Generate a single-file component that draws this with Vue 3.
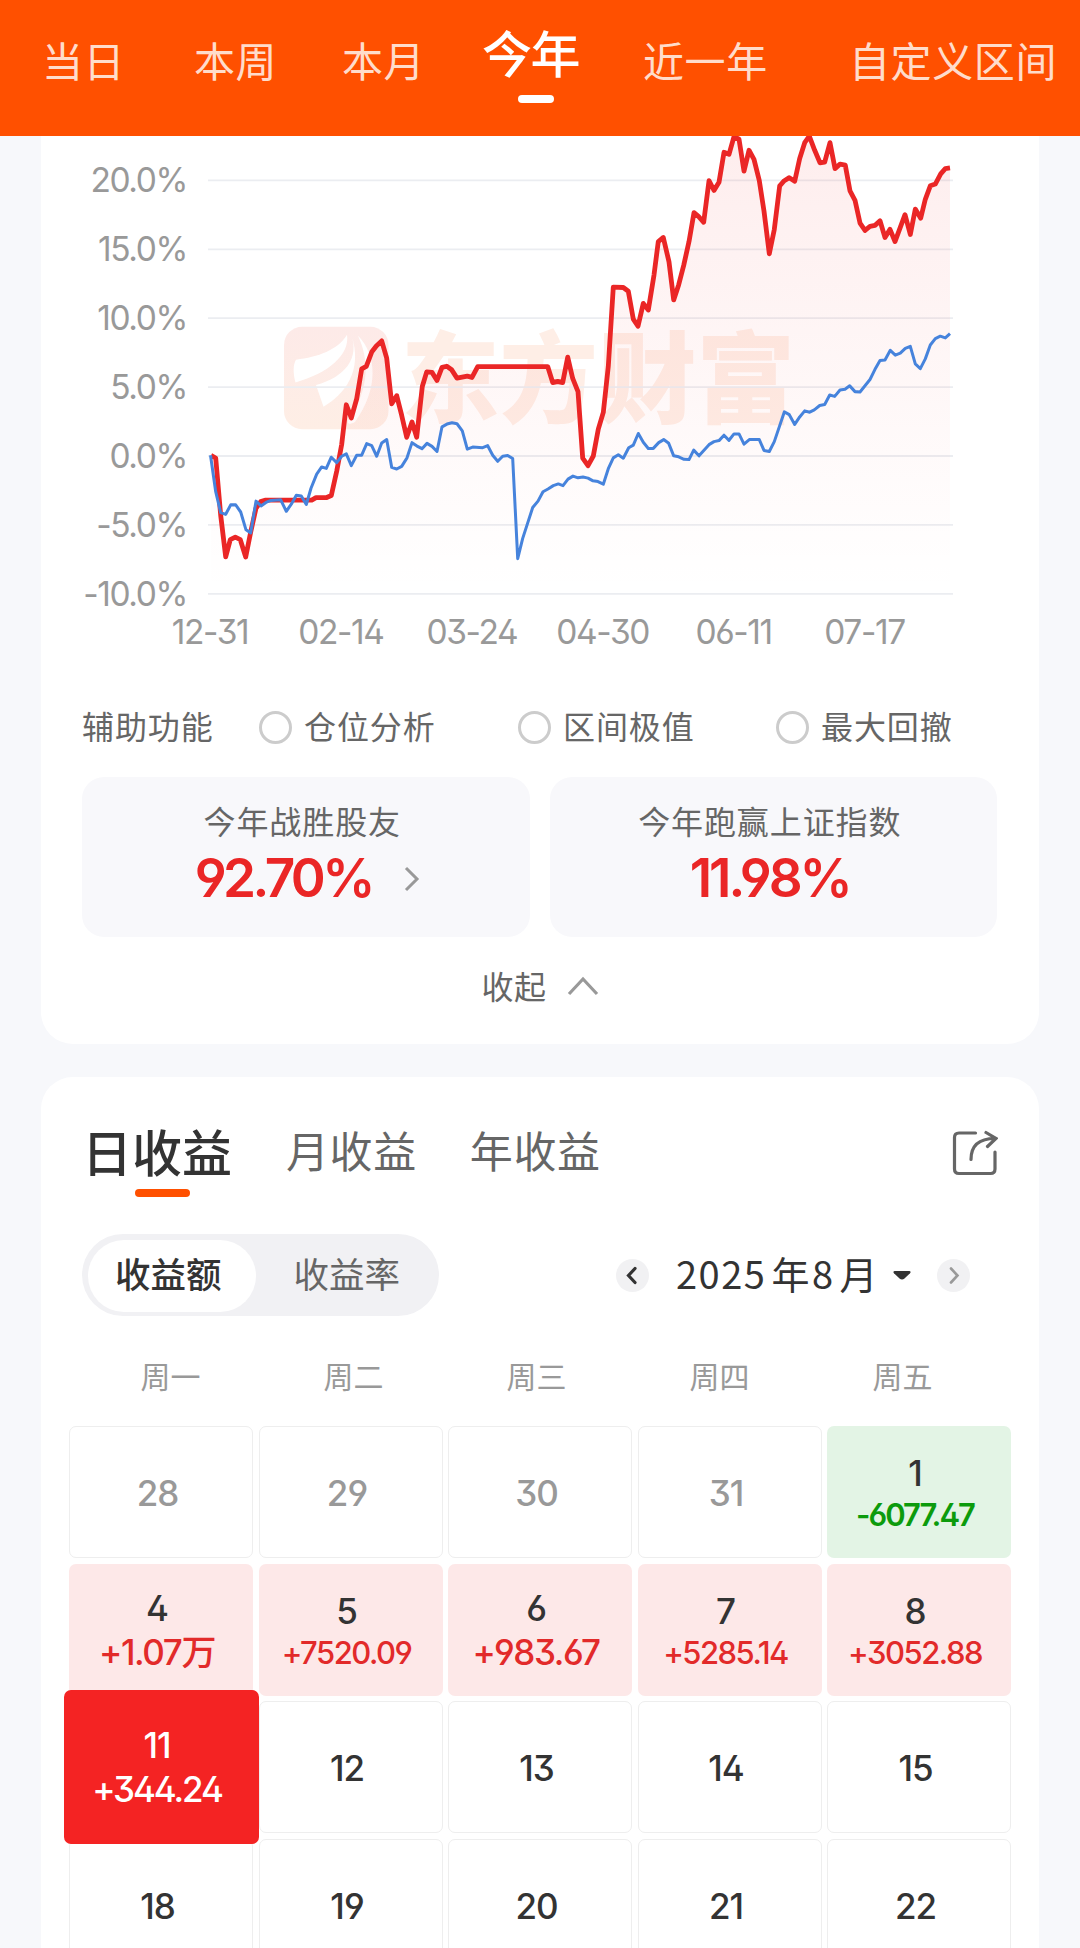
<template>
  <div class="page">
    <header class="range-bar">
      <div
        v-for="r in ranges"
        :key="r"
        class="range"
        :class="{ active: r === activeRange }"
        @click="activeRange = r"
      >{{ r }}</div>
    </header>

    <section class="card chart-card">
      <svg class="chart" viewBox="41 136 998 561">
        <defs>
          <linearGradient id="areaFill" gradientUnits="userSpaceOnUse" x1="0" y1="136" x2="0" y2="587">
            <stop offset="0" stop-color="#f02020" stop-opacity="0.08" />
            <stop offset="0.75" stop-color="#f02020" stop-opacity="0.018" />
            <stop offset="1" stop-color="#f02020" stop-opacity="0" />
          </linearGradient>
          <linearGradient id="markFill" x1="0" y1="0" x2="0" y2="1">
            <stop offset="0" stop-color="#fdeae8" />
            <stop offset="1" stop-color="#feeee5" />
          </linearGradient>
        </defs>

        <!-- watermark -->
        <g transform="translate(0 -1.8) scale(1 1.014)">
          <rect x="284" y="324" width="104.5" height="101" rx="18" fill="url(#markFill)" />
          <path class="leaf" d="M296 356.5C318 354 338 347 347 332C350 352 328 370 295.500 379C293 370 293 361 296 356.500Z" />
          <path class="leaf" d="M351 331C360 355 345 374 316 381.500L323.500 403C344 391 364 368 351 331Z" />
          <path class="leaf" d="M358 333C377 352 379 385 355 418C350 421 346 420 349 415C370 385 369 356 358 333Z" />
          <text class="mark-text" x="401" y="411" textLength="394" lengthAdjust="spacingAndGlyphs">东方财富</text>
        </g>

        <g v-for="(t, i) in yTicks" :key="t">
          <line class="grid-line" x1="208" x2="953" :y1="180.4 + i * 68.9" :y2="180.4 + i * 68.9" />
          <text class="tick" x="187" :y="192.3 + i * 68.9" text-anchor="end">{{ t }}</text>
        </g>
        <text
          v-for="(t, i) in xTicks"
          :key="t"
          class="tick"
          :x="210 + i * 130.9"
          y="644"
          text-anchor="middle"
        >{{ t }}</text>

        <g transform="translate(0 -1.8) scale(1 1.014)">
          <polygon :points="`211,587 ${mine} 950,587`" fill="url(#areaFill)" />
          <polyline class="line mine" :points="mine" />
          <polyline class="line index" :points="index" />
        </g>
      </svg>

      <div class="helpers">
        <span class="helpers-label">辅助功能</span>
        <label v-for="h in helpers" :key="h" class="helper"><i class="radio"></i><span>{{ h }}</span></label>
      </div>

      <div class="stats">
        <div class="stat">
          <div class="stat-title">今年战胜股友</div>
          <div class="stat-value with-arrow">
            <span>92.70%</span>
            <svg class="stat-arrow" viewBox="0 0 16 26"><path d="M2 2L13 13L2 24" /></svg>
          </div>
        </div>
        <div class="stat">
          <div class="stat-title">今年跑赢上证指数</div>
          <div class="stat-value"><span>11.98%</span></div>
        </div>
      </div>

      <div class="collapse">
        <span>收起</span>
        <svg viewBox="0 0 32 20"><path d="M2 18L16 3L30 18" /></svg>
      </div>
    </section>

    <section class="card profit-card">
      <div class="tabs">
        <div
          v-for="t in tabs"
          :key="t"
          class="tab"
          :class="{ active: t === activeTab }"
          @click="activeTab = t"
        >{{ t }}</div>
        <svg class="share" viewBox="0 0 46 46">
          <path d="M23.500 3H7Q2.500 3 2.500 7.500V39Q2.500 43.500 7 43.500H38.500Q43 43.500 43 39V22" />
          <path d="M19 29.500C19 16 27 8.500 43 8.500M34 2.500L44 8.500L35.500 16.500" />
        </svg>
      </div>

      <div class="toolbar">
        <div class="segment">
          <span class="seg on">收益额</span>
          <span class="seg">收益率</span>
        </div>
        <div class="month">
          <span class="nav"><svg viewBox="0 0 33 33"><path d="M19 9.500L12.500 16.500L19 23.500" /></svg></span>
          <span class="month-text"><b>2025</b>年<b>8</b>月</span>
          <svg class="caret" viewBox="0 0 18 9"><path d="M1.500 0H16.500Q18.500 .5 17 2.200L11.500 7.600Q9 9.600 6.500 7.600L1 2.200Q-.5 .5 1.500 0Z" /></svg>
          <span class="nav off"><svg viewBox="0 0 33 33"><path d="M14 9.500L20.500 16.500L14 23.500" /></svg></span>
        </div>
      </div>

      <div class="weekdays">
        <span v-for="w in weekdays" :key="w">{{ w }}</span>
      </div>

      <div class="calendar">
        <div v-for="d in days" :key="d.day" class="cell" :class="d.type">
          <div class="day">{{ d.day }}</div>
          <div v-if="d.value" class="value" :class="{ small: d.value.length > 7 }">{{ d.value }}</div>
        </div>
      </div>
    </section>
  </div>
</template>

<script setup>
import { ref } from "vue"

const ranges = ["当日", "本周", "本月", "今年", "近一年", "自定义区间"]
const activeRange = ref("今年")

const tabs = ["日收益", "月收益", "年收益"]
const activeTab = ref("日收益")

const helpers = ["仓位分析", "区间极值", "最大回撤"]
const weekdays = ["周一", "周二", "周三", "周四", "周五"]

const yTicks = ["20.0%", "15.0%", "10.0%", "5.0%", "0.0%", "-5.0%", "-10.0%"]
const xTicks = ["12-31", "02-14", "03-24", "04-30", "06-11", "07-17"]

const mine =
  "211,451 215.7,453.5 220.7,510 225.7,551 230.3,534 235.3,531.5 240.3,534 245.7,551 250.7,526.5 256,503 " +
  "260.7,496.5 265.7,495 311.7,495 316,492.5 326.7,492.5 331.3,490.5 336.7,466.5 341.7,440 346.3,401 351.3,414 " +
  "356.7,395 361.7,365.5 366.3,363 371.7,349 376.3,343 381.7,338 386.7,355 391.7,400 396.7,392 401.7,411.5 " +
  "406.7,433 412,418 416.7,433 422.3,383 426.7,368.5 432,369 437,377 442,364 446.7,363 451.7,366.5 457,374.7 " +
  "467.3,372.7 472,374 477.7,363.3 547.7,363.3 552.7,379 557.7,378 562.7,379 567.7,354 572.7,375 578,388 " +
  "582.7,453.5 588,461 593.3,451.5 598.3,425 603.3,408.5 608.3,363 613.3,285 623.3,285.3 628.3,289 633.3,316.5 " +
  "638,323.5 643.3,301 648.3,307.500 654,273 658.3,240 663.3,236 669,260 673.7,297.500 678.7,282.5 683.7,263.5 " +
  "689,240 694,211.5 698.7,215.5 703.7,221 709,180 714,189.500 719,181.5 724,152 729,154 734,136.5 739,139 " +
  "744,170.5 749,150 754,159 759.3,180 764,210 769.3,252 774.3,228 779.7,185 784.3,180 789.3,177 794.7,180.500 " +
  "799.7,158 804.7,142.5 809.3,136 814.7,150 820,162.3 824.7,161.7 830,142.5 835,168 840,163.7 845.3,164.7 " +
  "850,190 855,199.3 860,221.7 865,229 870,225 875,224 880,219.5 885,236 890,228 895,240 905,213.5 910.3,233 " +
  "915.3,208 920.7,217 925.3,198.3 930.3,185 935.3,183.3 940.7,173.3 945.3,168 950,167.3"

const index =
  "210.5,450.7 215.7,486.7 220.7,507.3 225.7,509 230.7,499.7 235.7,499.7 240.7,506.7 246,524.3 250.7,527.3 256,496 " +
  "261,500.7 266,497.3 271,495.3 280.7,494.7 286.3,506 291.3,499 296.3,490.3 301.3,491 306.3,499.3 311,483.3 " +
  "316.7,469.3 321.7,462.3 326.3,463.7 331.3,452.7 336.7,458 341.7,451.7 346.3,449.3 351.3,461 356.7,450.7 " +
  "361.7,450.7 366.7,439.3 371.7,441.3 376.7,451.7 381.7,438.7 386.7,435.3 391.7,462.7 396.7,464.3 401.7,461.7 " +
  "407,453.3 412,438.3 417,441.7 422,444.3 427,439 432,442 437,447 442,422.7 447,420 452,418.7 457,419.7 " +
  "462.3,426.7 467.3,444.7 472.7,442.7 482.7,443.3 487.7,441.3 492.7,450.7 497.7,456.7 502.7,451.7 507.7,451 " +
  "512.7,454 517.7,552.7 522.7,532.7 532.7,502.3 538,496 543,486.7 548,484 553.3,480.7 558.3,479 563,480.7 " +
  "568,474.3 573,471.3 578,473 583,472.3 588,473.3 593,476 598,476.7 603.3,479.3 608.3,464 613.3,453.3 " +
  "618.3,450.3 623.3,453.7 628.7,443.3 633.3,440.7 638.3,429.3 643.3,438 648.3,444 653.3,444 658.7,438.3 " +
  "663.7,435.3 668.7,439 673.7,451.3 678.7,452.3 684,454.7 689,455 693.7,445.7 699,451.3 709,440.3 714,437.3 " +
  "719,436.3 724,431 729,436 734,429.7 739,429.7 744,439.7 749.3,435.3 759.3,435.3 764,446 769.3,447 774.3,437.3 " +
  "784.3,408 789.3,410.7 794.7,420.3 799.7,413 804.7,407 809.7,408.3 814.3,406 819.7,401.7 824.7,400.7 " +
  "829.7,391.3 834.7,392.7 840,386.3 845,385.7 849.7,382.3 855,388 860,388.3 870,376 875,366 880,357.3 " +
  "885,356.7 890.3,347.3 895.3,352 900.3,350 905.3,345.3 910.3,343.3 915.3,360.7 920.3,365.3 925.3,355.7 " +
  "930.3,342 935.3,335.7 940.3,333.3 945.3,335 950,330.7"

const days = [
  { day: 28, type: "other" },
  { day: 29, type: "other" },
  { day: 30, type: "other" },
  { day: 31, type: "other" },
  { day: 1, type: "loss", value: "-6077.47" },
  { day: 4, type: "gain", value: "+1.07万" },
  { day: 5, type: "gain", value: "+7520.09" },
  { day: 6, type: "gain", value: "+983.67" },
  { day: 7, type: "gain", value: "+5285.14" },
  { day: 8, type: "gain", value: "+3052.88" },
  { day: 11, type: "selected", value: "+344.24" },
  { day: 12 },
  { day: 13 },
  { day: 14 },
  { day: 15 },
  { day: 18 },
  { day: 19 },
  { day: 20 },
  { day: 21 },
  { day: 22 }
]
</script>

<style>
body {
  margin: 0;
  background: #f7f8fb;
}
</style>

<style scoped>
.page {
  width: 1080px;
  height: 1948px;
  overflow: hidden;
  background: #f7f8fb;
  color: #333;
  font-family: Inter, "Noto Sans CJK SC", sans-serif;
  font-feature-settings: "ss01", "cv09";
}

.range-bar {
  height: 136px;
  box-sizing: border-box;
  padding-left: 42px;
  background: #ff5000;
  display: grid;
  grid-template-columns: 152px 148px 140px 161px 206px auto;
}

.range {
  color: #ffdccb;
  font-size: 41px;
  letter-spacing: 0.6px;
  line-height: 124px;
  white-space: nowrap;
}

.range.active {
  position: relative;
  color: #fff;
  font-size: 50px;
  font-weight: 500;
  letter-spacing: -1.5px;
  line-height: 111px;
}

.range.active::after {
  content: "";
  position: absolute;
  left: 36px;
  top: 95px;
  width: 36px;
  height: 8px;
  border-radius: 4px;
  background: #fff;
}

.card {
  margin: 0 41px;
  background: #fff;
}

.chart-card {
  height: 908px;
  border-radius: 0 0 32px 32px;
}

.chart {
  display: block;
  width: 998px;
  height: 561px;
}

.leaf {
  fill: #fff;
}

.mark-text {
  font-family: "Noto Sans CJK SC", sans-serif;
  font-size: 98px;
  font-weight: 900;
  fill: #feeee6;
}

.grid-line {
  stroke: #ebedf1;
  stroke-width: 1.8;
}

.tick {
  font-size: 33.5px;
  letter-spacing: -1.4px;
  fill: #999;
}

.line {
  fill: none;
  stroke-linejoin: round;
  stroke-linecap: butt;
}

.mine {
  stroke: #ea2626;
  stroke-width: 4.8;
}

.index {
  stroke: #4683dc;
  stroke-width: 3;
}

.helpers {
  height: 61px;
  padding-left: 41px;
  display: grid;
  grid-template-columns: 177px 259px 258px auto;
  align-items: center;
  font-size: 32px;
  letter-spacing: 0.9px;
  line-height: 40px;
  color: #666;
}

.helper {
  display: flex;
  align-items: center;
}

.radio {
  width: 33px;
  height: 33px;
  box-sizing: border-box;
  border: 3px solid #ccc;
  border-radius: 50%;
  margin-right: 12px;
}

.stats {
  margin: 19px 42px 0 41px;
  display: grid;
  grid-template-columns: 1fr 1fr;
  gap: 20px;
}

.stat {
  height: 160px;
  border-radius: 22px;
  background: #f8f8fb;
  display: flex;
  flex-direction: column;
  align-items: center;
  box-sizing: border-box;
  padding: 23px 7px 0 0;
}

.stat-title {
  font-size: 32px;
  letter-spacing: 0.9px;
  line-height: 46px;
  color: #666;
}

.stat-value {
  display: flex;
  align-items: center;
  font-size: 53px;
  font-weight: 600;
  letter-spacing: -3px;
  line-height: 64px;
  color: #ea2626;
}

.stat-value.with-arrow {
  margin-left: 10px;
  letter-spacing: -3.6px;
}

.stat-arrow {
  width: 16px;
  height: 26px;
  margin: 2px 0 0 32px;
  fill: none;
  stroke: #999;
  stroke-width: 3;
}

.collapse {
  height: 96px;
  display: flex;
  justify-content: center;
  align-items: center;
  font-size: 32px;
  letter-spacing: 0.5px;
  line-height: 40px;
  color: #666;
}

.collapse span {
  margin-top: 5px;
}

.collapse svg {
  width: 32px;
  height: 20px;
  margin: 1px 0 0 20px;
  fill: none;
  stroke: #999;
  stroke-width: 3.2;
}

.profit-card {
  margin-top: 33px;
  height: 900px;
  border-radius: 32px 32px 0 0;
}

.tabs {
  height: 150px;
  padding: 0 41px 0 41px;
  display: flex;
  align-items: center;
}

.tab {
  font-size: 43px;
  letter-spacing: 0.6px;
  color: #666;
  line-height: 60px;
  margin-right: 53px;
}

.tab.active {
  position: relative;
  margin-right: 54px;
  padding-top: 4px;
  font-size: 50px;
  font-weight: 500;
  letter-spacing: 0;
  color: #333;
}

.tab.active::after {
  content: "";
  position: absolute;
  left: 53px;
  top: 69px;
  width: 55px;
  height: 8px;
  border-radius: 4px;
  background: #ff5000;
}

.share {
  width: 46px;
  height: 46px;
  margin: 2px 0 0 auto;
  fill: none;
  stroke: #666;
  stroke-width: 3.2;
  stroke-linecap: round;
}

.toolbar {
  margin: 7px 69px 0 41px;
  height: 82px;
  display: flex;
  justify-content: space-between;
  align-items: center;
}

.segment {
  width: 357px;
  height: 82px;
  box-sizing: border-box;
  padding: 6px 24px 4px 6px;
  border-radius: 41px;
  background: #f1f1f4;
  display: flex;
  justify-content: space-between;
}

.seg {
  height: 72px;
  line-height: 72px;
  padding-right: 15px;
  font-size: 35.5px;
  color: #666;
}

.seg.on {
  width: 141px;
  padding: 0 0 0 27px;
  border-radius: 36px;
  background: #fff;
  color: #333;
  font-weight: 500;
}

.month {
  display: flex;
  align-items: center;
}

.nav {
  width: 33px;
  height: 33px;
  border-radius: 50%;
  background: #f1f1f3;
}

.nav svg {
  display: block;
  fill: none;
  stroke: #333;
  stroke-width: 3.2;
  stroke-linecap: round;
}

.nav.off svg {
  stroke: #999;
  stroke-width: 2.6;
}

.month-text {
  width: 197px;
  margin-left: 27px;
  font-family: "Noto Sans CJK SC", sans-serif;
  font-size: 38px;
  letter-spacing: 1.5px;
  line-height: 60px;
  margin-top: -5px;
  white-space: nowrap;
}

.month-text b {
  font-weight: 400;
  margin-right: 5px;
}

.month-text b + b {
  margin-left: 1px;
}

.caret {
  width: 18px;
  height: 9px;
  margin: 0 26px 0 20px;
  fill: #333;
}

.weekdays {
  display: grid;
  grid-template-columns: repeat(5, 183px);
  padding: 14px 0 0 38px;
  height: 96px;
  line-height: 94px;
  font-size: 30px;
  text-align: center;
  color: #999;
}

.calendar {
  display: grid;
  grid-template-columns: repeat(5, 184px);
  grid-auto-rows: 132px;
  gap: 5.7px 5.5px;
  padding-left: 28px;
}

.cell {
  box-sizing: border-box;
  padding-right: 7px;
  border: 1px solid #eee;
  border-radius: 7px;
  text-align: center;
  font-weight: 500;
}

.day {
  font-size: 35px;
  letter-spacing: -1px;
  line-height: 132px;
}

.other {
  color: #999;
}

.gain,
.loss,
.selected {
  border: none;
  padding: 23px 8px 0 0;
}

.gain .day,
.loss .day,
.selected .day {
  line-height: 42px;
}

.gain:has(.small),
.loss:has(.small) {
  padding-top: 26px;
}

.value {
  font-size: 35px;
  letter-spacing: -1.4px;
  line-height: 47px;
  white-space: nowrap;
}

.value.small {
  font-size: 31px;
  letter-spacing: -1.5px;
  line-height: 42px;
}

.gain {
  background: #fde8e8;
}

.gain .value {
  color: #e22a2a;
}

.loss {
  background: #e3f4e5;
}

.loss .value {
  color: #0c9b0c;
  font-weight: 600;
  letter-spacing: -2px;
}

.selected {
  position: relative;
  z-index: 1;
  color: #fff;
}

.selected .value {
  letter-spacing: -2.1px;
}

.selected::before {
  content: "";
  position: absolute;
  z-index: -1;
  inset: -11px -6px -11px -5px;
  border-radius: 7px;
  background: #f42323;
}
</style>
